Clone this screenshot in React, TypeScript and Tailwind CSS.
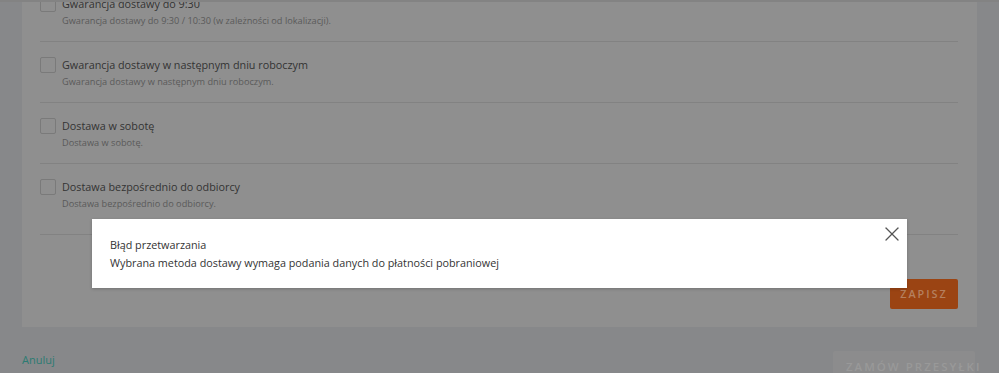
import { X } from 'lucide-react';

const options = [
  {
    title: 'Gwarancja dostawy do 9:30',
    desc: 'Gwarancja dostawy do 9:30 / 10:30 (w zależności od lokalizacji).',
  },
  {
    title: 'Gwarancja dostawy w następnym dniu roboczym',
    desc: 'Gwarancja dostawy w następnym dniu roboczym.',
  },
  { title: 'Dostawa w sobotę', desc: 'Dostawa w sobotę.' },
  {
    title: 'Dostawa bezpośrednio do odbiorcy',
    desc: 'Dostawa bezpośrednio do odbiorcy.',
  },
];

const OptionRow = ({ title, desc, last }: { title: string; desc: string; last?: boolean }) => (
  <div className={`border-b border-[#828282] pt-[14px] ${last ? 'pb-[22px]' : 'pb-[12px]'}`}>
    <label className="flex h-[18px] items-center gap-[6px]">
      <span className="h-[16px] w-[16px] shrink-0 rounded-[2px] border border-[#7a7a7a] bg-[#8f8f8f]" />
      <span className="text-[10.8px] text-[#333]">{title}</span>
    </label>
    <p className="h-[16px] pl-[22px] text-[9.2px] leading-[16px] text-[#5a5a5a]">{desc}</p>
  </div>
);

const App = () => {
  return (
    <div
      className="relative h-[373px] w-[999px] overflow-hidden border-t-2 border-[#838383] bg-[#87888a]"
      style={{ fontFamily: '"Open Sans", "Noto Sans", sans-serif' }}
    >
      {/* Card with shipment options */}
      <div className="-mt-[21px] ml-[22px] w-[955px] bg-[#8f8f8f] pb-[18px] pl-[18px] pr-[19px]">
        {options.map((o, i) => (
          <OptionRow key={o.title} title={o.title} desc={o.desc} last={i === options.length - 1} />
        ))}
        <div className="mt-[44px] flex justify-end">
          <button className="h-[30px] w-[68px] rounded-[2px] bg-[#9b4413] text-[10.8px] font-semibold tracking-[2px] text-[#b5805f]">
            ZAPISZ
          </button>
        </div>
      </div>

      {/* Footer actions */}
      <div className="mt-[24px] flex items-start justify-between pl-[22px] pr-[24px]">
        <a className="mt-[1px] text-[11px] text-[#2c7b72]">Anuluj</a>
        <button className="h-[26px] w-[142px] whitespace-nowrap rounded-[2px] bg-[#8c8c8d] pl-[13px] pt-[6px] text-left text-[11.5px] font-semibold tracking-[2px] text-[#999]">
          ZAMÓW PRZESYŁKI
        </button>
      </div>

      {/* Error modal */}
      <div className="absolute left-[92px] top-[217px] h-[69px] w-[815px] bg-white pl-[18px] pt-[17px] shadow-[0_1px_3px_rgba(0,0,0,0.2)]">
        <p className="text-[10.8px] leading-[18px] text-[#333]">Błąd przetwarzania</p>
        <p className="text-[10.8px] leading-[18px] text-[#333]">
          Wybrana metoda dostawy wymaga podania danych do płatności pobraniowej
        </p>
        <button className="absolute right-[3px] top-[3px] text-[#555]">
          <X size={24} strokeWidth={1.3} />
        </button>
      </div>
    </div>
  );
};

export default App;
